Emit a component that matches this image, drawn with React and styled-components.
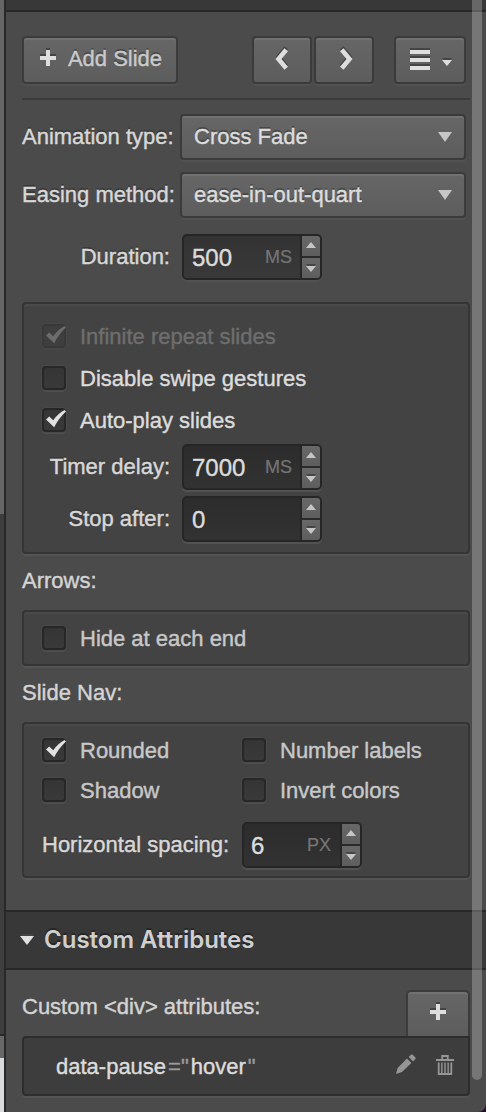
import React from "react";
import styled, { createGlobalStyle, css } from "styled-components";

const GlobalStyle = createGlobalStyle`
  *, *::before, *::after { box-sizing: border-box; }
  body {
    margin: 0;
    background: #4b4b4b;
    font-family: "Liberation Sans", Arial, Helvetica, sans-serif;
    font-size: 22px;
    color: #d8d8d8;
    -webkit-font-smoothing: antialiased;
    -webkit-text-stroke: 0.4px currentColor;
  }
  button { font: inherit; color: inherit; margin: 0; }
`;

const Screen = styled.div`
  display: flex;
  width: 486px;
  height: 1112px;
  position: relative;
  overflow: hidden;
  background: #22102a;
`;

const Gutter = styled.div`
  display: flex;
  flex-direction: column;
  width: 6px;
  flex: none;
  border-right: 2px solid #282828;
`;

const GutterPart = styled.div`
  height: ${(p) => p.$h}px;
  background: ${(p) => p.$bg};
`;

const Panel = styled.main`
  flex: 1;
  background: #4b4b4b;
  border-bottom-right-radius: 8px;
`;

const PreviousHeader = styled.div`
  height: 12px;
  background: #383838;
  border-bottom: 2px solid #282828;
`;

const Section = styled.section`
  padding: ${(p) => p.$pad};
`;

const raised = css`
  background: linear-gradient(#666, #5d5d5d);
  border: 2px solid #3b3b3b;
  box-shadow: inset 0 2px 0 #717171, 0 2px 0 #525252;
`;

const Toolbar = styled.div`
  display: flex;
  height: 64px;
  padding-right: 4px;
  border-bottom: 2px solid #3b3b3b;
`;

const Button = styled.button`
  ${raised}
  display: flex;
  align-items: center;
  justify-content: center;
  width: ${(p) => p.$w}px;
  height: 48px;
  margin-left: ${(p) => p.$ml || 0}px;
  padding: 0;
  border-radius: 4px;
  color: #cacaca;
  text-shadow: 0 -2px 0 #474747;
`;

const ButtonLabel = styled.span`
  padding: 0 0 3px 12px;
  line-height: 24px;
`;

const Icon = styled.svg`
  display: block;
  flex: none;
  overflow: visible;
  margin: ${(p) => p.$m || 0};
  filter: ${(p) => (p.$flat ? "none" : "drop-shadow(0 -2px 0 #444)")};
`;

const Row = styled.div`
  display: flex;
  align-items: center;
  height: 46px;
  margin-top: ${(p) => p.$mt || 0}px;
`;

const Label = styled.label`
  width: ${(p) => p.$w}px;
  flex: none;
  padding-bottom: 1px;
  padding-right: ${(p) => p.$pr || 0}px;
  text-align: ${(p) => (p.$right ? "right" : "left")};
  line-height: 24px;
  white-space: nowrap;
  text-shadow: 0 -2px 0 #3a3a3a;
`;

const Select = styled.div`
  ${raised}
  display: flex;
  align-items: center;
  justify-content: space-between;
  width: 286px;
  height: 46px;
  padding: 0 12px;
  border-radius: 4px;
  color: #dcdcdc;
  text-shadow: 0 -2px 0 #474747;
  line-height: 24px;
`;

const SelectText = styled.span`
  padding-bottom: 1px;
`;

const NumberBox = styled.div`
  display: flex;
  align-items: stretch;
  width: ${(p) => p.$w}px;
  height: 46px;
  border: 2px solid #262626;
  border-radius: 5px;
  background: linear-gradient(#2c2c2c, #323232);
  box-shadow: 0 2px 0 #525252;
  ${(p) => p.$light && css`background: linear-gradient(#333, #393939);`}
`;

const NumberValue = styled.span`
  flex: 1;
  padding-left: ${(p) => (p.$tight ? 7 : 8)}px;
  font-size: 24px;
  line-height: 43px;
  color: #dcdcdc;
`;

const Unit = styled.span`
  padding-right: ${(p) => (p.$tight ? 9 : 8)}px;
  font-size: 18px;
  line-height: 43px;
  color: #757575;
  -webkit-text-stroke-width: 0.2px;
`;

const Spinner = styled.div`
  display: flex;
  flex-direction: column;
  gap: 2px;
  width: 20px;
  border-left: 2px solid #262626;
  background: #2a2a2a;
`;

const Step = styled.div`
  display: flex;
  align-items: center;
  justify-content: center;
  flex: 1;
  background: linear-gradient(#686868, #5e5e5e);
  border-radius: ${(p) => (p.$down ? "0 0 3px 0" : "0 3px 0 0")};
`;

const Group = styled.div`
  height: ${(p) => p.$h}px;
  margin-top: ${(p) => p.$mt}px;
  padding: ${(p) => p.$pt}px 18px 0;
  border: 2px solid #353535;
  border-radius: 4px;
  background: #434343;
  box-shadow: inset 0 2px 0 #4a4a4a, 0 2px 0 #545454;
`;

const CheckGrid = styled.div`
  display: grid;
  grid-template-columns: ${(p) => (p.$two ? "200px 200px" : "1fr")};
  row-gap: ${(p) => p.$gap}px;
`;

const Check = styled.label`
  display: flex;
  align-items: center;
  gap: 14px;
  height: 24px;
  line-height: 26px;
  white-space: nowrap;
  color: ${(p) => (p.$disabled ? "#6e6e6e" : p.$bright ? "#dcdcdc" : "#c8c8c8")};
`;

const CheckText = styled.span`
  height: 24px;
`;

const Box = styled.span`
  display: block;
  width: 24px;
  height: 24px;
  border: 2px solid ${(p) => (p.$disabled ? "#393939" : "#272727")};
  border-radius: 4px;
  background: ${(p) => (p.$disabled ? "#3e3e3e" : "linear-gradient(#353535, #393939)")};
  box-shadow: 0 0 0 1px ${(p) => (p.$disabled ? "#464646" : "#494949")}, 0 2px 0 ${(p) => (p.$disabled ? "#484848" : "#505050")};
`;

const Caption = styled.div`
  height: 24px;
  margin-top: ${(p) => p.$mt || 0}px;
  line-height: 26px;
  color: #d4d4d4;
`;

const SectionHeader = styled.header`
  display: flex;
  align-items: center;
  height: 60px;
  padding-left: 14px;
  border: solid #282828;
  border-width: 2px 0;
  background: #383838;
`;

const Heading = styled.h2`
  margin: 0;
  padding: 0 0 1px 10px;
  font-family: Inter, "Open Sans", sans-serif;
  font-size: 24px;
  font-weight: 600;
  line-height: 30px;
  color: #cfcfcf;
  text-shadow: 0 -2px 0 #262626;
  white-space: nowrap;
  -webkit-text-stroke-width: 0;
`;

const AttrHeader = styled.div`
  display: flex;
  justify-content: space-between;
  height: 46px;
`;

const AddTab = styled.button`
  ${raised}
  display: flex;
  justify-content: center;
  width: 64px;
  height: 46px;
  padding: 12px 0 0;
  border-bottom: 0;
  border-radius: 5px 5px 0 0;
  box-shadow: inset 0 2px 0 #717171;
`;

const AttrItem = styled.div`
  display: flex;
  align-items: center;
  height: 60px;
  padding: 0 14px 0 32px;
  border: 2px solid #2d2d2d;
  border-radius: 4px 0 4px 4px;
  background: #3d3d3d;
  box-shadow: 0 2px 0 #545454;
  line-height: 24px;
  color: #dcdcdc;
`;

const Attr = styled.span`
  flex: 1;
  padding-top: 2px;
`;

const Punct = styled.span`
  margin: 0 ${(p) => p.$r || 0}px 0 ${(p) => p.$l || 0}px;
  color: #9a9a9a;
`;

const Scrollbar = styled.div`
  position: absolute;
  top: 0;
  right: 4px;
  width: 10px;
  height: 1080px;
  border-radius: 0 0 5px 5px;
  background: rgba(255, 255, 255, 0.24);
`;

const Plus = ({ m }) => (
  <Icon width="16" height="16" viewBox="0 0 16 16" $m={m}>
    <path d="M6 0h4v6h6v4h-6v6H6v-6H0V6h6z" fill="#dedede" />
  </Icon>
);

const Chevron = ({ flip }) => (
  <Icon width="13" height="22" viewBox="0 0 13 22" $m={flip ? "0 0 2px 4px" : "0 2px 2px 0"}>
    <path
      d={flip ? "M1.8 1.8L9.5 11L1.8 20.2" : "M11.2 1.8L3.5 11L11.2 20.2"}
      fill="none"
      stroke="#dedede"
      strokeWidth="4.6"
    />
  </Icon>
);

const Triangle = ({ w, h, up, color = "#c6c6c6", m, flat }) => (
  <Icon width={w} height={h} viewBox={`0 0 ${w} ${h}`} $m={m} $flat={flat}>
    <path d={up ? `M0 ${h}L${w / 2} 0L${w} ${h}z` : `M0 0H${w}L${w / 2} ${h}z`} fill={color} />
  </Icon>
);

const CheckMark = ({ color }) => (
  <Icon width="20" height="18" viewBox="0 0 20 18" $m="0 0 0 2px" $flat>
    <path d="M0 9.5L3.2 6.6L7.2 10.2Q12 3.5 18.5 0L20 1.6Q13 8 8.2 17.2Z" fill={color} />
  </Icon>
);

const Checkbox = ({ label, checked, disabled, bright }) => (
  <Check $disabled={disabled} $bright={bright}>
    <Box $disabled={disabled}>{checked && <CheckMark color={disabled ? "#6c6c6c" : "#e2e2e2"} />}</Box>
    <CheckText>{label}</CheckText>
  </Check>
);

const NumberField = ({ value, unit, w = 140, light, tight }) => (
  <NumberBox $w={w} $light={light}>
    <NumberValue $tight={tight}>{value}</NumberValue>
    {unit && <Unit $tight={tight}>{unit}</Unit>}
    <Spinner>
      <Step><Triangle up w={10} h={6} m="0 0 2px" flat /></Step>
      <Step $down><Triangle w={10} h={6} m="2px 0 0" /></Step>
    </Spinner>
  </NumberBox>
);

const Dropdown = ({ value }) => (
  <Select>
    <SelectText>{value}</SelectText>
    <Triangle w={14} h={10} flat />
  </Select>
);

export default function App() {
  return (
    <Screen>
      <GlobalStyle />
      <Gutter>
        <GutterPart $h={514} $bg="#666" />
        <GutterPart $h={520} $bg="#3e3e3e" />
        <GutterPart $h={2} $bg="#282828" />
        <GutterPart $h={22} $bg="#686868" />
        <GutterPart $h={54} $bg="#d9dadb" />
      </Gutter>
      <Panel>
        <PreviousHeader />
        <Section $pad="24px 16px 32px">
          <Toolbar>
            <Button $w={156}>
              <Plus m="0 0 4px 2px" />
              <ButtonLabel>Add Slide</ButtonLabel>
            </Button>
            <Button $w={60} $ml={74} aria-label="Previous"><Chevron /></Button>
            <Button $w={60} $ml={2} aria-label="Next"><Chevron flip /></Button>
            <Button $w={72} $ml={20} aria-label="Menu">
              <Icon width="20" height="20" viewBox="0 0 20 20" $m="0 12px 1px 2px">
                <path d="M0 0h20v4H0zM0 8h20v4H0zM0 16h20v4H0z" fill="#dedede" />
              </Icon>
              <Triangle w={10} h={6} m="5px 0 0" color="#dedede" />
            </Button>
          </Toolbar>
          <Row $mt={14}>
            <Label $w={158}>Animation type:</Label>
            <Dropdown value="Cross Fade" />
          </Row>
          <Row $mt={12}>
            <Label $w={158}>Easing method:</Label>
            <Dropdown value="ease-in-out-quart" />
          </Row>
          <Row $mt={16}>
            <Label $w={160} $right $pr={12}>Duration:</Label>
            <NumberField value="500" unit="MS" light />
          </Row>
          <Group $h={252} $mt={22} $pt={20}>
            <CheckGrid $gap={18}>
              <Checkbox label="Infinite repeat slides" checked disabled />
              <Checkbox label="Disable swipe gestures" bright />
              <Checkbox label="Auto-play slides" checked bright />
            </CheckGrid>
            <Row $mt={12}>
              <Label $w={140} $right $pr={12}>Timer delay:</Label>
              <NumberField value="7000" unit="MS" />
            </Row>
            <Row $mt={6}>
              <Label $w={140} $right $pr={12}>Stop after:</Label>
              <NumberField value="0" />
            </Row>
          </Group>
          <Caption $mt={14}>Arrows:</Caption>
          <Group $h={56} $mt={18} $pt={14}>
            <Checkbox label="Hide at each end" />
          </Group>
          <Caption $mt={14}>Slide Nav:</Caption>
          <Group $h={156} $mt={18} $pt={14}>
            <CheckGrid $two $gap={16}>
              <Checkbox label="Rounded" checked />
              <Checkbox label="Number labels" />
              <Checkbox label="Shadow" />
              <Checkbox label="Invert colors" />
            </CheckGrid>
            <Row $mt={20}>
              <Label $w={200}>Horizontal spacing:</Label>
              <NumberField value="6" unit="PX" w={120} tight />
            </Row>
          </Group>
        </Section>
        <SectionHeader>
          <Triangle w={14} h={9} color="#e2e2e2" />
          <Heading>Custom Attributes</Heading>
        </SectionHeader>
        <Section $pad="20px 16px 16px">
          <AttrHeader>
            <Caption $mt={4}>Custom &lt;div&gt; attributes:</Caption>
            <AddTab aria-label="Add attribute"><Plus /></AddTab>
          </AttrHeader>
          <AttrItem>
            <Attr>
              data-pause<Punct $l={2}>=</Punct><Punct $r={2}>"</Punct>hover<Punct $l={2}>"</Punct>
            </Attr>
            <Icon width="20" height="20" viewBox="0 0 20 20" $m="0 20px 4px 0" $flat>
              <path d="M0 20L1.6 14L11 4.600L15.400 9L6 18Z" fill="#969696" />
              <path d="M12.700 3L15 .7Q15.800 -.1 16.600 .7L19.400 3.500Q20.200 4.300 19.400 5.100L17.100 7.400Z" fill="#969696" />
            </Icon>
            <Icon width="18" height="20" viewBox="0 0 18 20" $m="0 0 2px" $flat>
              <path d="M0 5h18M6.200 5V1h5.600v4M2.700 7.500v11.500h12.600V7.500" fill="none" stroke="#969696" strokeWidth="1.800" />
              <path d="M5.850 7.500V19M9 7.500V19M12.150 7.500V19" fill="none" stroke="#969696" strokeWidth="1.400" />
            </Icon>
          </AttrItem>
        </Section>
      </Panel>
      <Scrollbar />
    </Screen>
  );
}
